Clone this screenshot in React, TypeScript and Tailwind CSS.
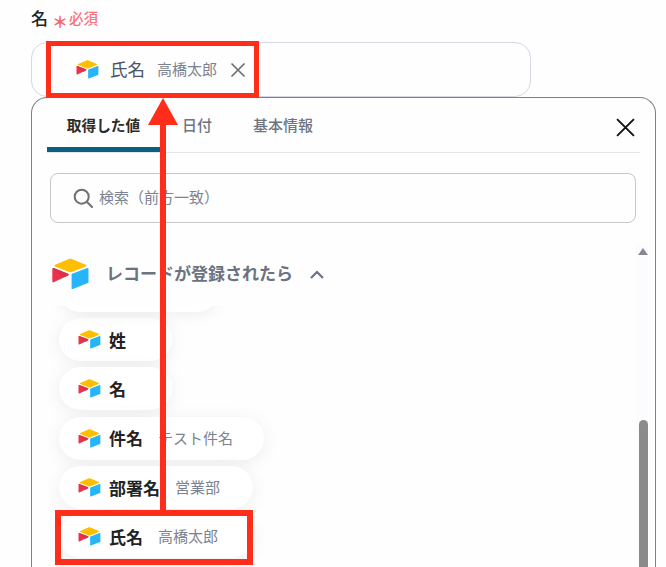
const Logo = ({ className }: { className: string }) => (
  <svg viewBox="0 0 200 170" className={className}>
    <path fill="#FFBF00" d="M89 4.8L16.2 34.9c-4.1 1.7-4 7.4.1 9.1l73.2 29c6.4 2.6 13.6 2.6 20 0l73.2-29c4.1-1.6 4.1-7.4.1-9.1l-73-30.1C103.2 2 95.7 2 89 4.8" />
    <path fill="#26B5F8" d="M105.9 88.9v72.5c0 3.4 3.5 5.8 6.7 4.5l81.6-31.7c1.9-.7 3.1-2.5 3.1-4.5V57.2c0-3.4-3.5-5.8-6.7-4.5L109 84.3c-1.9.8-3.1 2.6-3.1 4.6" />
    <path fill="#ED3049" d="M86.9 92.6l-24.2 11.7-2.5 1.2L9.1 130c-3.2 1.6-7.4-.8-7.4-4.4V57.5c0-1.3.7-2.4 1.6-3.3.4-.4.8-.7 1.2-.9 1.2-.7 3-.9 4.4-.3l77.5 30.7c4 1.5 4.3 7.1.5 8.9" />
    <path fill="#D8324A" d="M86.9 92.6l-24.2 11.7L3.3 54.2c.4-.4.8-.7 1.2-.9 1.2-.7 3-.9 4.4-.3l77.5 30.7c4 1.5 4.3 7.1.5 8.9" />
  </svg>
);

const chips = [
  { name: "姓", width: "w-[113px]" },
  { name: "名", width: "w-[113px]" },
  { name: "件名", value: "テスト件名", width: "w-[205px]" },
  { name: "部署名", value: "営業部", width: "w-[194px]" },
  { name: "氏名", value: "高橋太郎", width: "w-[194px]" },
];

export default function App() {
  return (
    <div className="relative h-[567px] w-[666px] overflow-hidden bg-[#fefefe] font-['Noto_Sans_CJK_JP',sans-serif]">
      <div className="pl-[31px] pt-[6px]">
        <div className="flex h-[24px] items-center">
          <span className="text-[17px] font-medium text-[#222222]">名</span>
          <span className="ml-[4px] mt-[6px] text-[16px] font-bold leading-none text-[#f9646b]">＊</span>
          <span className="ml-[1px] text-[14.5px] font-medium text-[#f9737a]">必須</span>
        </div>

        {/* selected value */}
        <div className="mt-[12px] flex h-[55px] w-[500px] items-center rounded-[16px] border border-[#d5d8e4] pl-[44px]">
          <Logo className="h-[19px] w-[23px]" />
          <span className="ml-[11px] text-[17.5px] text-[#4b5563]">氏名</span>
          <span className="ml-[12px] text-[15px] text-[#7b8290]">高橋太郎</span>
          <svg viewBox="0 0 16 16" className="ml-[13px] mt-[1px] h-[16px] w-[16px] text-[#6f6f6f]" fill="none" stroke="currentColor" strokeWidth="1.7">
            <path d="M1.5 1.5l13 13M14.5 1.5l-13 13" />
          </svg>
        </div>

        {/* picker panel */}
        <div className="h-[490px] w-[625px] rounded-t-[16px] border border-b-0 border-[#808080] px-[15px]">
          <div className="flex h-[55px] items-stretch border-b border-[#e6e6e6]">
            <div className="flex w-[113px] items-center justify-center rounded-t-[3px] border-b-[5px] border-[#0b5f85] pt-[5px] text-[14.7px] font-bold text-[#2b2b2b]">
              取得した値
            </div>
            <div className="ml-[22px] flex items-center text-[15px] font-medium text-[#6f757f]">日付</div>
            <div className="ml-[41px] flex items-center text-[15px] font-medium text-[#6f757f]">基本情報</div>
            <svg viewBox="0 0 18 18" className="ml-auto mr-[5px] mt-[20px] h-[19px] w-[19px] text-[#111111]" fill="none" stroke="currentColor" strokeWidth="1.8">
              <path d="M1 1l16 16M17 1L1 17" />
            </svg>
          </div>

          <div className="ml-[3px] mt-[20px] flex h-[50px] w-[586px] items-center rounded-[8px] border border-[#c6c6c6] pl-[22px]">
            <svg viewBox="0 0 20 20" className="h-[20px] w-[20px] text-[#707070]" fill="none" stroke="currentColor" strokeWidth="2">
              <circle cx="8.7" cy="8.7" r="7" />
              <path d="M13.8 13.8L19 19" strokeLinecap="round" />
            </svg>
            <span className="ml-[6px] mt-[-2px] text-[15px] text-[#7b8290]">検索（前方一致）</span>
          </div>

          <div className="flex">
            <div className="w-[589px] shrink-0">
              <div className="ml-[5px] mt-[34px] flex h-[34px] items-center">
                <Logo className="h-[32px] w-[37px]" />
                <span className="ml-[17px] mt-[-3px] text-[17px] font-bold text-[#6b7280]">レコードが登録されたら</span>
                <svg viewBox="0 0 14 9" className="ml-[17px] h-[9px] w-[14px] text-[#6b7280]" fill="none" stroke="currentColor" strokeWidth="2.2">
                  <path d="M1 8l6-6 6 6" />
                </svg>
              </div>

              <div className="relative mt-[15px] h-[262px] overflow-hidden pl-[12px] pt-[12px]">
                <div className="absolute left-[12px] top-[-37px] h-[43px] w-[160px] rounded-[22px] bg-white shadow-[0_2px_14px_rgba(90,90,120,0.1)]" />
                <div className="flex flex-col gap-[6.3px]">
                  {chips.map((chip) => (
                    <div
                      key={chip.name}
                      className={`flex h-[43px] items-center rounded-[22px] bg-white pl-[19px] shadow-[0_3px_16px_rgba(90,90,120,0.1)] ${chip.width}`}
                    >
                      <Logo className="h-[19px] w-[23px] shrink-0" />
                      <span className="ml-[8px] text-[17px] font-bold text-[#222222]">{chip.name}</span>
                      {chip.value && <span className="ml-[15px] text-[15px] text-[#7b8290]">{chip.value}</span>}
                    </div>
                  ))}
                </div>
              </div>
            </div>

            {/* scrollbar */}
            <div className="relative mt-[20px] h-[325px] w-[12px] shrink-0 bg-[#fcfbfd]">
              <div className="ml-[2px] mt-[5px] h-0 w-0 border-x-[5px] border-b-[7px] border-x-transparent border-b-[#8a8790]" />
              <div className="absolute bottom-0 left-[3px] h-[148px] w-[9px] rounded-t-[5px] bg-[#8a8a8a]" />
            </div>
          </div>
        </div>
      </div>

      {/* annotation overlays */}
      <div className="absolute left-[46px] top-[41px] h-[57px] w-[213px] border-[5px] border-[#ff2d1a]" />
      <div className="absolute left-[55px] top-[510px] h-[55px] w-[198px] border-[6px] border-[#ff2d1a]" />
      <svg viewBox="0 0 30 412" className="absolute left-[148px] top-[98px] h-[412px] w-[30px]">
        <path d="M15 0L30 27H18V412H12V27H0Z" fill="#ff2d1a" />
      </svg>
    </div>
  );
}
